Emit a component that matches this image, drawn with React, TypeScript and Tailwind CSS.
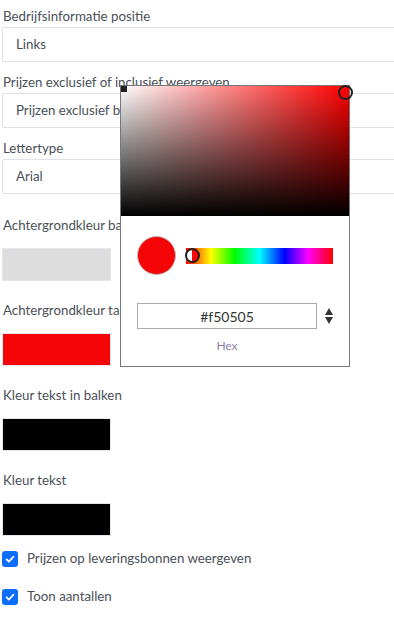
const TextField = ({ label, value }: { label: string; value: string }) => (
  <div className="mb-[10px]">
    <label className="block leading-[21px] text-[13.3px] text-[#495057]">{label}</label>
    <div className="h-[35px] w-[420px] ml-[-1px] border border-[#dee2e6] rounded-[2px] bg-white flex items-center pl-[13px] text-[13.3px] text-[#495057]">
      {value}
    </div>
  </div>
);

const ColorField = ({ label, color, top }: { label: string; color: string; top: string }) => (
  <div className={top}>
    <label className="block leading-[21px] text-[13.3px] text-[#495057]">{label}</label>
    <div className={`mt-[12px] h-[33px] w-[109px] ml-[-1px] border border-[#e3e6ea] ${color}`}></div>
  </div>
);

const CheckRow = ({ label }: { label: string }) => (
  <div className="flex items-center gap-[9px] h-[16px]">
    <span className="w-[16px] h-[16px] ml-[-1px] rounded-[3px] bg-[#0d6efd] flex items-center justify-center">
      <svg viewBox="0 0 16 16" className="w-[12px] h-[12px]" fill="none" stroke="white" strokeWidth={2.4} strokeLinecap="round" strokeLinejoin="round">
        <path d="M3.5 8.5l3 3 6-6.5" />
      </svg>
    </span>
    <span className="text-[13.3px] text-[#495057]">{label}</span>
  </div>
);

const ColorPicker = () => (
  <div className="absolute left-[120px] top-[85px] w-[230px] h-[282px] border border-[#777] bg-white">
    {/* saturation area */}
    <div className="relative h-[130px] w-full bg-[#ff0000]">
      <div className="absolute inset-0 bg-gradient-to-r from-white to-transparent"></div>
      <div className="absolute inset-0 bg-gradient-to-b from-transparent to-black"></div>
      <div className="absolute left-0 top-0 w-[6px] h-[6px] bg-[#222]"></div>
      <div className="absolute right-[-4px] top-[-1px] w-[15px] h-[15px] rounded-full border-2 border-[#222]"></div>
    </div>
    <div className="flex items-center pl-[16px] pr-[16px] mt-[20px]">
      <div className="w-[39px] h-[39px] rounded-full bg-[#f50505] border border-[#bbb]"></div>
      <div className="relative ml-[10px] h-[16px] w-[147px] bg-[linear-gradient(to_right,#f00_0%,#ff0_17%,#0f0_33%,#0ff_50%,#00f_67%,#f0f_83%,#f00_100%)]">
        <div className="absolute left-[-1px] top-[0px] w-[15px] h-[15px] rounded-full border-2 border-[#222] bg-[linear-gradient(to_right,white_50%,#f00_50%)]"></div>
      </div>
    </div>
    <div className="flex items-center pl-[16px] mt-[28px]">
      <div className="w-[180px] h-[26px] border border-[#aaa] flex items-center justify-center text-[14px] text-[#333]">
        #f50505
      </div>
      <svg viewBox="0 0 8 16" className="ml-[8px] w-[8px] h-[16px]" fill="#333">
        <path d="M4 0L8 7H0z" />
        <path d="M0 9H8L4 16z" />
      </svg>
    </div>
    <div className="w-[180px] ml-[16px] mt-[8px] text-center text-[12px] text-[#8b80a8]">Hex</div>
  </div>
);

export default function App() {
  return (
    <div className="relative w-[394px] h-[617px] overflow-hidden bg-white font-['Lato',sans-serif]">
      <div className="pl-[3px] pt-[6px]">
        <TextField label="Bedrijfsinformatie positie" value="Links" />
        <TextField label="Prijzen exclusief of inclusief weergeven" value="Prijzen exclusief btw" />
        <TextField label="Lettertype" value="Arial" />
        <ColorField label="Achtergrondkleur balken" color="bg-[#dddddd]" top="mt-[21px]" />
        <ColorField label="Achtergrondkleur tabellen" color="bg-[#f50505]" top="mt-[19px]" />
        <ColorField label="Kleur tekst in balken" color="bg-black" top="mt-[19px]" />
        <ColorField label="Kleur tekst" color="bg-black" top="mt-[19px]" />
        <div className="mt-[15px] flex flex-col gap-[22px]">
          <CheckRow label="Prijzen op leveringsbonnen weergeven" />
          <CheckRow label="Toon aantallen" />
        </div>
      </div>
      <ColorPicker />
    </div>
  );
}
